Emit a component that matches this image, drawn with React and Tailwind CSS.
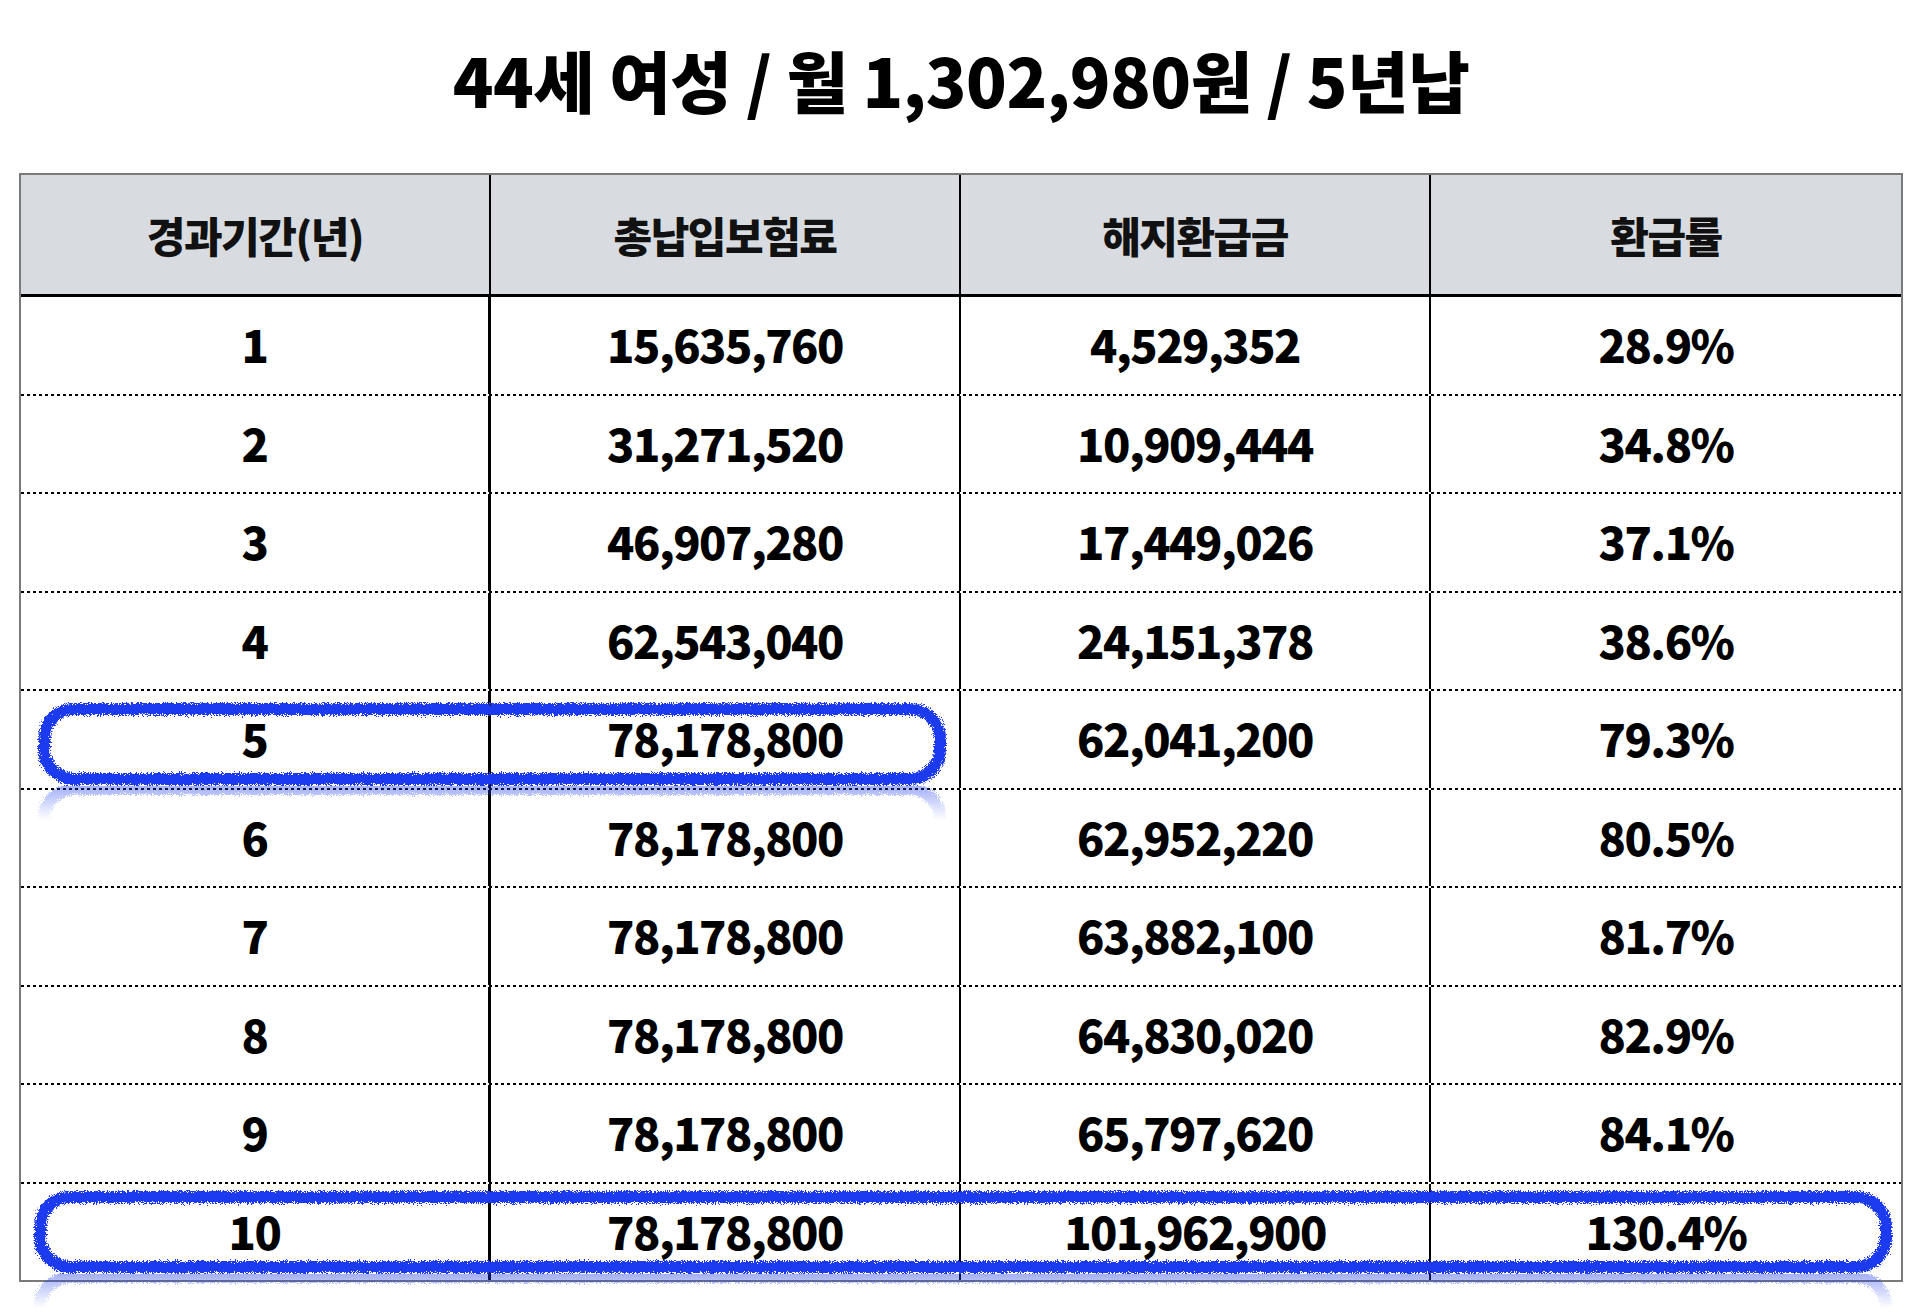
import React from "react";

const rows = [
  ["1", "15,635,760", "4,529,352", "28.9%"],
  ["2", "31,271,520", "10,909,444", "34.8%"],
  ["3", "46,907,280", "17,449,026", "37.1%"],
  ["4", "62,543,040", "24,151,378", "38.6%"],
  ["5", "78,178,800", "62,041,200", "79.3%"],
  ["6", "78,178,800", "62,952,220", "80.5%"],
  ["7", "78,178,800", "63,882,100", "81.7%"],
  ["8", "78,178,800", "64,830,020", "82.9%"],
  ["9", "78,178,800", "65,797,620", "84.1%"],
  ["10", "78,178,800", "101,962,900", "130.4%"],
];

const headers = ["경과기간(년)", "총납입보험료", "해지환급금", "환급률"];

function Marker({ id, w, h, className }) {
  const shape = (fid) => (
    <>
      <defs>
        <filter id={fid} x="-5%" y="-20%" width="110%" height="140%">
          <feTurbulence type="fractalNoise" baseFrequency="1.1" numOctaves="2" seed="3" result="n" />
          <feDisplacementMap in="SourceGraphic" in2="n" scale="9" xChannelSelector="R" yChannelSelector="G" />
        </filter>
      </defs>
      <rect
        x="7"
        y="7"
        width={w - 14}
        height={h - 14}
        rx="30"
        fill="none"
        stroke="#1b3af0"
        strokeWidth="12"
        filter={`url(#${fid})`}
      />
    </>
  );
  return (
    <div className={"pointer-events-none absolute " + className}>
      <svg width={w} height={h} className="block">
        {shape(id)}
      </svg>
      <div className="h-[34px] overflow-hidden opacity-40 [mask-image:linear-gradient(to_bottom,black,transparent)]">
        <svg width={w} height={h} className="block -scale-y-100 -mt-[4px] blur-[0.6px]">
          {shape(id + "r")}
        </svg>
      </div>
    </div>
  );
}

export default function App() {
  return (
    <div
      className="min-h-[1316px] w-[1922px] bg-white text-black"
      style={{ fontFamily: '"Noto Sans CJK KR", "Noto Sans", sans-serif' }}
    >
      <div className="flex h-[173px] items-center justify-center pb-[16px]">
        <h1 className="text-[67px] font-extrabold leading-none tracking-[-0.5px]">
          44세 여성 / 월 1,302,980원 / 5년납
        </h1>
      </div>

      <div className="relative mx-[19px] border-2 border-[#7a7a7a]">
        <div className="grid h-[122px] grid-cols-4 border-b-[3px] border-black bg-[#d8dce1]">
          {headers.map((t, i) => (
            <div
              key={t}
              className={
                "flex items-center justify-center text-[42px] font-extrabold tracking-[-1.5px] text-[#111] " +
                (i < 3 ? "border-r-2 border-black" : "")
              }
            >
              {t}
            </div>
          ))}
        </div>

        {rows.map((r, ri) => (
          <div key={r[0]}>
            <div className="grid h-[96.5px] grid-cols-4">
              {r.map((c, ci) => (
                <div
                  key={ci}
                  className={
                    "flex items-center justify-center pb-[3px] text-[45px] font-extrabold tracking-[-1.5px] " +
                    (ci === 0 ? "border-r-[3px] border-black " : ci < 3 ? "border-r-2 border-black" : "")
                  }
                >
                  {c}
                </div>
              ))}
            </div>
            {ri < rows.length - 1 && (
              <div className="h-[2px] bg-[repeating-linear-gradient(90deg,#000_0_3px,transparent_3px_6px)]" />
            )}
          </div>
        ))}

        <Marker id="m5" w={910} h={84} className="left-[16px] top-[527px]" />
        <Marker id="m10" w={1860} h={84} className="left-[12px] top-[1015px]" />
      </div>
    </div>
  );
}
